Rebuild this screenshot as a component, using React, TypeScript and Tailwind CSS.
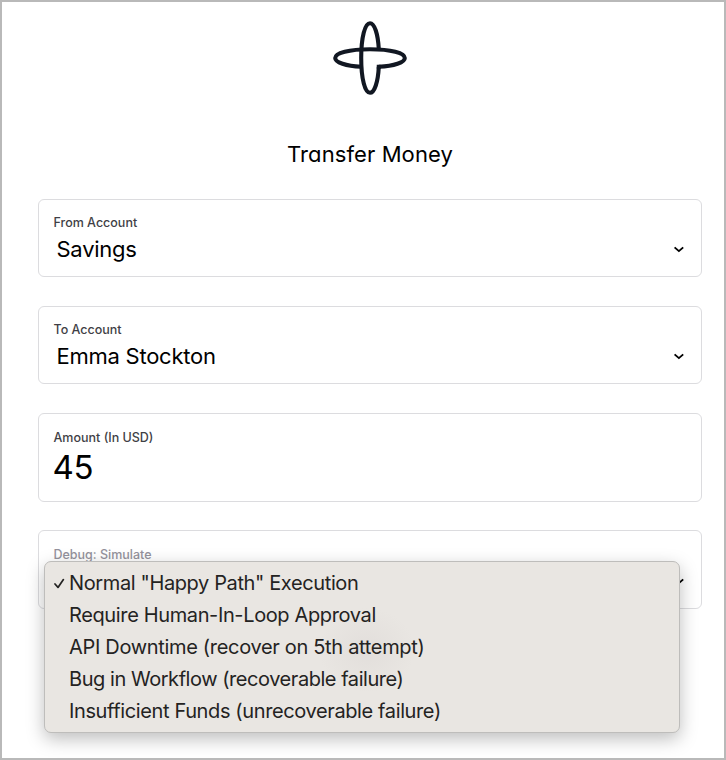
import type { ReactNode } from "react";

const options = [
  { label: 'Normal "Happy Path" Execution', tracking: "tracking-[-0.38px]" },
  { label: "Require Human-In-Loop Approval", tracking: "tracking-[-0.37px]" },
  { label: "API Downtime (recover on 5th attempt)", tracking: "tracking-[-0.32px]" },
  { label: "Bug in Workflow (recoverable failure)", tracking: "tracking-[-0.45px]" },
  { label: "Insufficient Funds (unrecoverable failure)", tracking: "tracking-[-0.38px]" },
];

function Logo() {
  return (
    <svg width="76" height="76" viewBox="0 0 76 76" fill="none" stroke="#111722" strokeWidth="4.1" className="shrink-0">
      <path d="M46.8 29.2C46 14 42.5 3.2 38 3.2C33 3.2 29.2 17 29.2 38C29.2 59 33 72.8 38 72.8C42.5 72.8 46 62 46.8 46.8" />
      <path d="M46.8 46.8C62 46 72.8 42.5 72.8 38C72.8 33 59 29.2 38 29.2C17 29.2 3.2 33 3.2 38C3.2 42.5 14 46 29.2 46.8" />
      <path d="M46.8 48.7V46.8H48.7" strokeLinejoin="miter" />
    </svg>
  );
}

function Chevron() {
  return (
    <svg width="11" height="7" viewBox="0 0 11 7" fill="none" stroke="#000" strokeWidth="1.9" className="mr-[17px] shrink-0">
      <path d="M1.6 1.4L5.9 5.1L10.2 1.4" />
    </svg>
  );
}

function Field({ label, muted, className, children }: { label: string; muted?: boolean; className: string; children?: ReactNode }) {
  return (
    <div className={`flex flex-col rounded-md border border-[#dcdcdf] pl-[14.5px] ${className}`}>
      <div className={`text-[12.5px] leading-[18px] font-medium ${muted ? "text-[#94929c]" : "text-[#3f3f46]"}`}>{label}</div>
      {children}
    </div>
  );
}

function Select({ value }: { value: string }) {
  return (
    <div className="mt-px flex h-[32px] items-center justify-between pl-[3px] text-[22px] leading-[32px] tracking-[-0.25px] text-black">
      <span>{value}</span>
      <Chevron />
    </div>
  );
}

function Menu() {
  return (
    <div className="absolute left-[5px] top-[30px] h-[172px] w-[636px] rounded-[7px] border border-[#bebdbb] bg-[#e9e6e2] bg-[radial-gradient(ellipse_48px_42px_at_322px_88px,#e2dedb,#e9e6e2)] pt-[5px] shadow-[0_6px_18px_rgba(0,0,0,0.26)]">
      {options.map((o, i) => (
        <div key={o.label} className="flex h-8 items-center whitespace-nowrap text-[20px] leading-8 text-[#242322]">
          <span className="flex w-6 shrink-0 pl-[9px]">
            {i === 0 && (
              <svg width="11" height="12" viewBox="0 0 11 12" fill="none" stroke="currentColor" strokeWidth="1.7" strokeLinecap="round" strokeLinejoin="round">
                <path d="M1 7L4 10.4L9.4 2.6" />
              </svg>
            )}
          </span>
          <span className={o.tracking}>{o.label}</span>
        </div>
      ))}
    </div>
  );
}

export default function App() {
  return (
    <main className="flex h-[760px] w-[726px] flex-col overflow-hidden border-2 border-[#b9b9b9] bg-white pl-9 pr-[22px] pt-[18px] font-['Inter',sans-serif]">
      <header className="flex h-[179px] flex-col items-center">
        <Logo />
        <h1 className="mt-[42px] whitespace-nowrap text-[22px] leading-[32px] tracking-[0.1px] text-black [font-feature-settings:'cv11']">Transfer Money</h1>
      </header>
      <Field label="From Account" className="h-[78px] pt-[14px]">
        <Select value="Savings" />
      </Field>
      <Field label="To Account" className="mt-[29px] h-[78px] pt-[14px]">
        <Select value="Emma Stockton" />
      </Field>
      <Field label="Amount (In USD)" className="mt-[29px] h-[89px] pt-[15px]">
        <div className="-ml-px -mt-px text-[33px] leading-[42px] tracking-[-0.3px] text-black">45</div>
      </Field>
      <Field label="Debug: Simulate" muted className="relative mt-[28px] h-[79px] pt-[15px]">
        <Select value="" />
        <Menu />
      </Field>
    </main>
  );
}
